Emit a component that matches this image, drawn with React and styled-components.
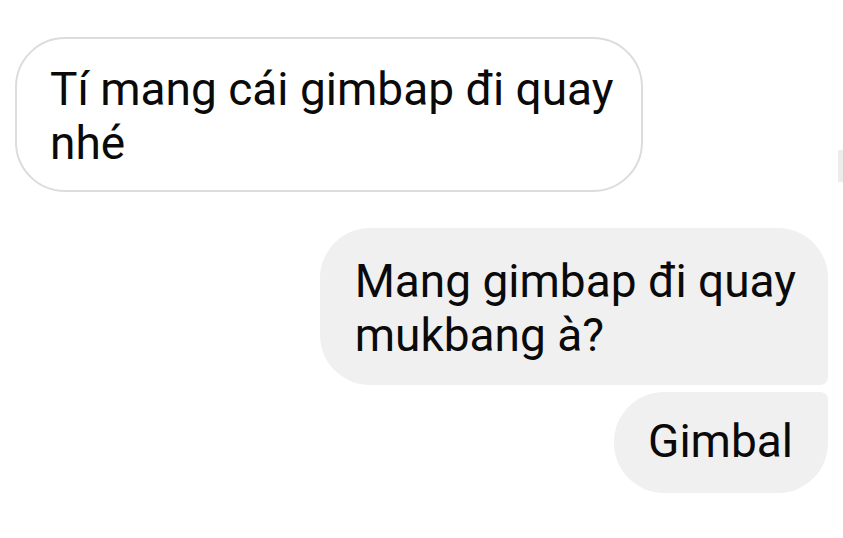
import React from 'react'
import styled, { createGlobalStyle } from 'styled-components'

const GlobalStyle = createGlobalStyle`
body {
  margin: 0;
  background: #ffffff;
  font-family: Roboto, "Noto Sans", sans-serif;
}
`

const Thread = styled.div`
position: relative;
display: flex;
flex-direction: column;
padding: 37px 15px 0 15px;
height: 538px;
box-sizing: border-box;
overflow: hidden;
`

const Row = styled.div`
display: flex;
justify-content: ${props => props.mine ? 'flex-end' : 'flex-start'};
margin-top: ${props => props.gap || 0}px;
`

const Bubble = styled.div`
box-sizing: border-box;
padding: ${props => props.pad};
font-size: 46px;
line-height: 54px;
white-space: nowrap;
color: #0a0a0a;
background: ${props => props.mine ? '#f0f0f0' : '#ffffff'};
border: ${props => props.mine ? 'none' : '2px solid #dcdcdc'};
border-radius: ${props => props.corners || '50px'};
`

const ScrollMark = styled.div`
position: absolute;
right: 0;
top: 150px;
width: 5px;
height: 32px;
background: #ececec;
`

const App = () => {
    return (
        <Thread>
            <GlobalStyle />
            <Row>
                <Bubble pad="23px 28px 20px 33px">Tí mang cái gimbap đi quay<br />nhé</Bubble>
            </Row>
            <Row mine gap={36}>
                <Bubble mine pad="26px 32px 23px 35px" corners="50px 50px 8px 50px">Mang gimbap đi quay<br />mukbang à?</Bubble>
            </Row>
            <Row mine gap={7}>
                <Bubble mine pad="22px 35px 25px 34px" corners="50px 8px 50px 50px">Gimbal</Bubble>
            </Row>
            <ScrollMark />
        </Thread>
    )
}

export default App
